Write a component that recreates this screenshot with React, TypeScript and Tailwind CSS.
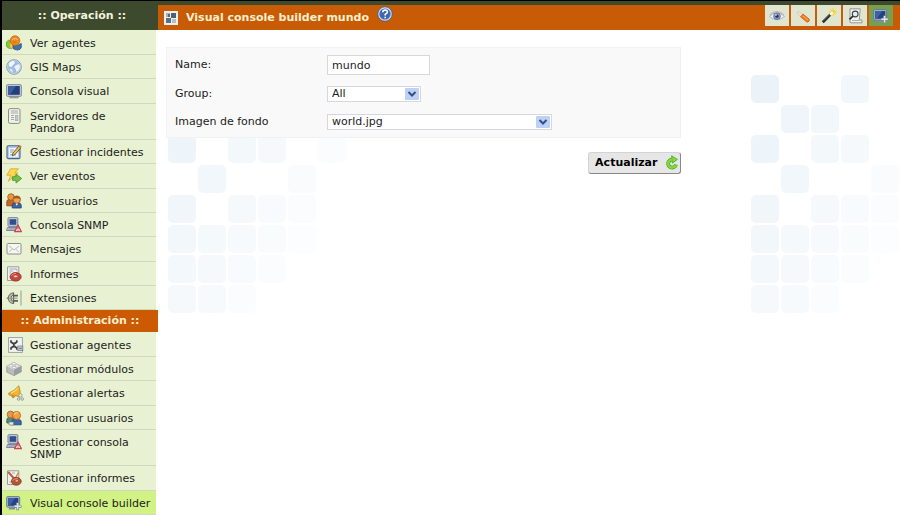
import React, { useState, ReactNode } from 'react';

const Icon = ({ children, className = '' }: { children: ReactNode; className?: string }) => (
    <svg viewBox="0 0 16 16" className={`w-4 h-4 shrink-0 ${className}`} aria-hidden="true">{children}</svg>
);

const IconAgents = () => (
    <Icon>
        <path d="M0.5 7 L2.5 5.2 L5.5 6 V13.8 L2.5 13 L0.5 11.5Z" fill="#7fc93e" stroke="#4f9a24" strokeWidth="0.7" />
        <path d="M3.6 7.5 L8 9.5 L8 14 L4 13Z" fill="#f2cd3a" stroke="#c9a01c" strokeWidth="0.5" />
        <path d="M7 9 L11 10.5 L15.3 8.5 V12.5 Q14.5 15 11.5 15 Q8 15 7 13Z" fill="#4471ab" stroke="#2d5488" strokeWidth="0.8" />
        <circle cx="9" cy="5.6" r="4.8" fill="#ef8a20" stroke="#c9660c" strokeWidth="0.8" />
        <path d="M6.2 4.8 Q9 2.2 12 4.6" fill="none" stroke="#ffbe6c" strokeWidth="1" />
        <path d="M6.5 7 H10.5" stroke="#cf6c12" strokeWidth="0.9" />
    </Icon>
);

const IconGlobe = () => (
    <Icon>
        <circle cx="8" cy="8" r="7.3" fill="#9fbbdf" stroke="#8295b4" strokeWidth="0.9" />
        <circle cx="8" cy="8" r="6.4" fill="none" stroke="#d5e2f1" strokeWidth="0.7" />
        <path d="M3 4 Q5.5 1.5 8 2 L9 4 L7 6 L5.5 8 L3 7.2Z" fill="#f2f6fb" />
        <path d="M9.5 6.5 L13 5 L14.2 8 L12.5 11.5 L10.5 13 L9.5 9.8 L8 8.6Z" fill="#eaf1f9" />
        <path d="M3.5 9.5 L6.5 10.5 L6.8 13.6 Q4 12.8 3.5 9.5Z" fill="#e2ecf7" />
    </Icon>
);

const IconScreen = () => (
    <Icon>
        <rect x="0.6" y="1.6" width="14.8" height="11.8" rx="1.2" fill="#c5cbd6" stroke="#7d8797" strokeWidth="0.9" />
        <rect x="2.2" y="3" width="11.6" height="8.8" fill="#213f7c" />
        <path d="M2.2 3 H10 L4 11.8 H2.2Z" fill="#3a5f9f" />
        <path d="M4.5 13.4 H11.5 L12.5 15 H3.5Z" fill="#9aa2ae" stroke="#78808e" strokeWidth="0.5" />
    </Icon>
);

const IconServer = () => (
    <Icon>
        <rect x="2.5" y="0.6" width="11.5" height="14.8" rx="1.6" fill="#f0f0ec" stroke="#8b8d88" />
        <path d="M4.8 3 H12 M4.8 5 H12" stroke="#a6a8a3" />
        <path d="M5 7.5 H8 M5 9.5 H8 M5 11.5 H8" stroke="#a6a8a3" />
        <rect x="9.3" y="7.3" width="2.6" height="5.4" fill="#c6c8c3" stroke="#9fa19c" strokeWidth="0.6" />
    </Icon>
);

const IconEdit = () => (
    <Icon>
        <rect x="1" y="1.8" width="13" height="12.8" rx="1.4" fill="#b8cbe9" stroke="#466293" strokeWidth="1.1" />
        <path d="M3 4 H12 V12.8 H3Z" fill="#f4f7fc" />
        <path d="M4 6 H8 M4 8 H7 M4 10.8 H10" stroke="#7f9ac6" />
        <path d="M7 9 L12.8 2.2 L14.8 3.8 L9 10.6 L6.2 11.8Z" fill="#edc445" stroke="#4c4228" strokeWidth="0.8" />
        <path d="M12.8 2.2 L13.8 0.9 L15.7 2.5 L14.8 3.8Z" fill="#d87a48" />
    </Icon>
);

const IconEvents = () => (
    <Icon>
        <path d="M4.5 0.8 H12.5 L8.8 5 H12 L2.3 13.3 L4.8 7.2 H0.8Z" fill="#fbd94c" stroke="#e0aa2c" strokeWidth="0.9" />
        <path d="M6.5 8.7 H10 V6 L15.6 10.5 L10 15 V12.3 H6.5Z" fill="#79c04a" stroke="#4d9632" strokeWidth="0.9" />
    </Icon>
);

const IconUsers = () => (
    <Icon>
        <path d="M0.8 12.8 V8.5 Q1 6.4 3.5 6.4 H7 Q9 6.4 9 8.5 V12.8Z" fill="#c5672a" stroke="#873d12" strokeWidth="0.8" />
        <circle cx="5" cy="4" r="3.3" fill="#e5963e" stroke="#9e571a" strokeWidth="0.8" />
        <path d="M6.2 15 V12 Q6.5 10 8.7 10 H12.5 Q15 10 15.2 12 V15Z" fill="#3c66a5" stroke="#213f74" strokeWidth="0.8" />
        <circle cx="10.8" cy="6.6" r="3.7" fill="#efa54d" stroke="#97531a" strokeWidth="0.8" />
        <path d="M7.3 6 Q8 2.6 11 2.9 Q14 3 14.4 6.2 Q11 4.6 7.3 6Z" fill="#9c5a22" />
        <path d="M9.5 10.4 L10.8 12.7 L12 10.4Z" fill="#fff" />
    </Icon>
);

const IconSnmp = () => (
    <Icon>
        <rect x="2" y="0.7" width="9.8" height="8.6" rx="0.8" fill="#cfd5e2" stroke="#66718c" strokeWidth="0.9" />
        <rect x="3.5" y="2.2" width="6.8" height="5.6" fill="#304f8b" />
        <path d="M1.5 10.5 H11.5 L12.5 13.5 H0.5Z" fill="#c3c9d5" stroke="#67718a" strokeWidth="0.8" />
        <path d="M2.5 12 H10.5" stroke="#77819a" strokeWidth="0.8" />
        <path d="M12 8 L15.4 14.7 H8.6Z" fill="#f6dcdc" stroke="#c8464c" strokeWidth="1.3" strokeLinejoin="round" />
        <path d="M12 10.2 V12.2 M12 13 V13.7" stroke="#91303a" strokeWidth="0.9" />
    </Icon>
);

const IconMail = () => (
    <Icon>
        <rect x="1" y="2.5" width="14" height="10.5" rx="1" fill="#f6f6f3" stroke="#8d8f8c" />
        <path d="M3 5 L8 9 L13 5 M3.2 11 L6 8.2 M12.8 11 L10 8.2" fill="none" stroke="#b1b3b0" strokeWidth="0.9" />
    </Icon>
);

const IconReport = () => (
    <Icon>
        <path d="M1.5 0.8 H12.8 V14.5 H1.5Z" fill="#f0f1f3" stroke="#8f949c" strokeWidth="0.9" />
        <path d="M3.5 3 H9.5 M3.5 5 H7 M3.5 7 H5" stroke="#98a1b2" strokeWidth="0.9" />
        <path d="M9 3 H11 V5.5" fill="none" stroke="#c9a3a3" />
        <ellipse cx="9.6" cy="10.8" rx="5.6" ry="4.3" fill="#c4473a" stroke="#8a2d26" strokeWidth="0.8" />
        <ellipse cx="9.6" cy="10.4" rx="2.2" ry="1.3" fill="#f0c9b8" stroke="#9c3a30" strokeWidth="0.6" />
        <path d="M5.2 9.6 Q7 7.2 10 7.4" fill="none" stroke="#e58a78" strokeWidth="1" />
    </Icon>
);

const IconPlug = () => (
    <Icon>
        <path d="M0.8 8.2 H3" stroke="#70736c" strokeWidth="1.4" />
        <path d="M7.5 2.8 Q2.3 3.2 2.3 8.2 Q2.3 13.2 7.5 13.6 V11.4 Q5 11 5 8.2 Q5 5.4 7.5 5Z" fill="#b4b8ad" stroke="#676b62" strokeWidth="0.9" />
        <path d="M7.5 2.8 V13.6" stroke="#5b5f57" strokeWidth="1.2" />
        <path d="M8 5.6 H12 M8 10.8 H12" stroke="#5b5f57" strokeWidth="1.7" />
        <path d="M5 8.2 H11.5" stroke="#898d84" strokeWidth="1" />
        <path d="M15 0.5 V15.5" stroke="#bac2ad" strokeWidth="1.8" />
    </Icon>
);

const IconAgentConf = () => (
    <Icon className="translate-x-0.5">
        <rect x="0.6" y="0.6" width="13.8" height="14.8" fill="#f1f3f0" stroke="#979da1" strokeWidth="0.9" />
        <path d="M3 3.2 V5 L4.8 6.3 H7 L8.8 5 V3.2 M3 12.8 V11 L4.8 9.7 H7 L8.8 11 V12.8 M5.9 6.3 V9.7" fill="none" stroke="#3d4245" strokeWidth="1.7" />
        <rect x="9.8" y="9" width="5" height="4.6" fill="#c5cbd2" stroke="#767e85" strokeWidth="0.8" />
        <path d="M10.7 11.3 H14" stroke="#59636c" strokeWidth="0.8" />
    </Icon>
);

const IconModule = () => (
    <Icon>
        <path d="M0.8 5.2 L7.5 2 L15.2 5 V10.8 L8 14.6 L0.8 11Z" fill="#b9bbbc" stroke="#8f9294" strokeWidth="0.8" />
        <path d="M0.8 5.2 L7.5 2 L15.2 5 L8 8.8Z" fill="#e4e6e6" />
        <path d="M8 8.8 L15.2 5 V10.8 L8 14.6Z" fill="#9a9ea0" />
        <ellipse cx="4.8" cy="4.8" rx="1.9" ry="1.3" fill="#f6f6f6" stroke="#a3a6a8" strokeWidth="0.6" />
        <ellipse cx="11" cy="4.8" rx="1.9" ry="1.3" fill="#f6f6f6" stroke="#a3a6a8" strokeWidth="0.6" />
        <ellipse cx="8" cy="2.7" rx="1.9" ry="1.3" fill="#f6f6f6" stroke="#a3a6a8" strokeWidth="0.6" />
        <ellipse cx="8" cy="6.6" rx="1.9" ry="1.2" fill="#f6f6f6" stroke="#a3a6a8" strokeWidth="0.6" />
    </Icon>
);

const IconAlert = () => (
    <Icon className="translate-x-0.5">
        <path d="M10.8 0.8 Q12.6 5.5 12.2 12 Q7 9.8 1 10 L0.6 8.2 Q6.8 5.8 10.8 0.8Z" fill="#f3b52f" stroke="#c48a1c" strokeWidth="0.9" />
        <path d="M3 8 Q8 6 10.3 2.8" fill="none" stroke="#fce39a" strokeWidth="1.1" />
        <path d="M3 10.2 L5 13 L7.5 10.9" fill="#dc8c1e" stroke="#b97420" strokeWidth="0.7" />
        <circle cx="12.4" cy="10.4" r="1.7" fill="#e6e8e4" stroke="#969b95" strokeWidth="0.9" />
        <circle cx="14.2" cy="14" r="1.3" fill="#e6e8e4" stroke="#969b95" strokeWidth="0.9" />
        <circle cx="10.6" cy="14" r="1.3" fill="#e6e8e4" stroke="#969b95" strokeWidth="0.9" />
    </Icon>
);

const IconUserConf = () => (
    <Icon>
        <path d="M0.8 13 V9.5 Q1 7.4 3.5 7.4 H8 V13Z" fill="#4a8a78" stroke="#2d5f66" strokeWidth="0.8" />
        <circle cx="4.6" cy="4.5" r="3.4" fill="#e39a4a" stroke="#a85f1c" strokeWidth="0.8" />
        <path d="M5.5 14.8 V12 Q6 9.6 8.4 9.6 H12.5 Q15 9.6 15.2 11.5 V14.8Z" fill="#3c66a5" stroke="#213f74" strokeWidth="0.8" />
        <circle cx="10.6" cy="5.4" r="4" fill="#f1a243" stroke="#b0651d" strokeWidth="0.8" />
        <path d="M8 4.6 Q9.5 2.2 12 3" fill="none" stroke="#ffd089" strokeWidth="1.1" />
        <path d="M3 12 H7.5 V15 H3Z" fill="#e4e9e4" stroke="#73887a" strokeWidth="0.7" />
    </Icon>
);

const IconReportConf = () => (
    <Icon>
        <path d="M1.5 0.8 H12.8 V14.5 H1.5Z" fill="#f3f2ed" stroke="#8f9190" strokeWidth="0.9" />
        <path d="M3.3 12 H5 M6 3 H9" stroke="#a6a8ab" />
        <path d="M2.2 2 L8.5 9" stroke="#b9603c" strokeWidth="2" />
        <path d="M12.5 2.5 L9.5 8.2" stroke="#d18945" strokeWidth="1.5" />
        <ellipse cx="10.3" cy="11.3" rx="4.9" ry="3.9" fill="#b95535" stroke="#7c3020" strokeWidth="0.8" />
        <ellipse cx="10.8" cy="10.8" rx="1.8" ry="1.2" fill="#efc0a6" stroke="#7c3020" strokeWidth="0.5" />
        <path d="M6.6 10.4 Q8.5 8.2 11.5 8.6" fill="none" stroke="#e39a7a" strokeWidth="1" />
    </Icon>
);

const IconBuilder = () => (
    <Icon>
        <rect x="0.7" y="1.6" width="13" height="10.6" rx="1" fill="#a8b4c9" stroke="#64748f" strokeWidth="0.9" />
        <rect x="2.1" y="3" width="10.2" height="7.8" fill="#234383" />
        <path d="M2.1 3 H9 L4 10.8 H2.1Z" fill="#3c62a4" />
        <path d="M3.5 12.2 H9 V14.4 H2.5Z" fill="#818c9f" />
        <path d="M11.6 7.4 V15.2 M7.9 11.3 H15.5" stroke="#7c8797" strokeWidth="2.8" />
        <path d="M11.6 8 V14.6 M8.5 11.3 H14.9" stroke="#dde4ee" strokeWidth="1.5" />
    </Icon>
);

const IconEye = () => (
    <Icon>
        <path d="M0.5 8.4 Q7.5 1.5 15.5 8.4 Q8 15 0.5 8.4Z" fill="#f7f7fa" stroke="#aeb0bb" strokeWidth="1" />
        <path d="M1 6.6 Q7.5 0.6 15 6.6" fill="none" stroke="#c9b8b0" strokeWidth="1.1" />
        <circle cx="8" cy="8.2" r="3.5" fill="#7f95c6" stroke="#5c709e" strokeWidth="0.6" />
        <circle cx="8" cy="8.2" r="1.6" fill="#22345d" />
        <circle cx="7" cy="7" r="0.8" fill="#fff" />
    </Icon>
);

const IconPencil = () => (
    <Icon>
        <path d="M2 4 L4.2 3.7 L8.2 6.7 L5.8 9.3 L2.8 6Z" fill="#ebe2d3" stroke="#c4b8a4" strokeWidth="0.5" />
        <path d="M5.5 8.8 L8 6 L14.3 11.2 Q14.8 13.9 12 14.2Z" fill="#ed7b1d" stroke="#cd5c10" strokeWidth="0.7" />
        <path d="M8 8 L13 12.2" stroke="#ffb066" strokeWidth="1" />
    </Icon>
);

const IconWand = () => (
    <Icon>
        <circle cx="11.8" cy="4.2" r="3.6" fill="#f6ea8a" />
        <path d="M12 0.2 V7.8 M8.2 4 H15.8 M9.3 1.3 L14.7 6.7 M14.7 1.3 L9.3 6.7" stroke="#e5c934" strokeWidth="0.9" />
        <path d="M1.8 14.2 L9.5 6.4" stroke="#2b2d29" strokeWidth="2.7" />
        <path d="M9.1 6.8 L11.8 4.1" stroke="#f7f7ee" strokeWidth="2.5" />
        <path d="M2.5 12.7 L8.8 6.3" stroke="#777a73" strokeWidth="0.7" />
    </Icon>
);

const IconPreview = () => (
    <Icon>
        <path d="M3 0.8 H13.2 L12.3 12 H15 V14.8 H4 Q2.2 14.6 3 12.5Z" fill="#f1f1ed" stroke="#8b8e87" strokeWidth="0.9" />
        <path d="M5 12.5 H12.5" stroke="#a8aaa4" strokeWidth="0.9" />
        <circle cx="8.2" cy="6" r="2.9" fill="#e4edf3" stroke="#3f4446" strokeWidth="1.1" />
        <path d="M6 8.2 L2.4 11.4" stroke="#262a2b" strokeWidth="1.8" />
    </Icon>
);

const IconHelp = () => (
    <svg viewBox="0 0 16 16" className="w-4 h-4" aria-hidden="true">
        <circle cx="8" cy="8" r="7.3" fill="#d3dbe8" stroke="#4a587e" strokeWidth="0.9" />
        <circle cx="8" cy="8" r="5.6" fill="#3e68b1" />
        <path d="M5.7 6.3 Q5.8 4 8.1 4 Q10.4 4.1 10.4 6 Q10.4 7.2 8.2 8.4 V9.5 M8.2 10.7 V12.2" fill="none" stroke="#fff" strokeWidth="1.6" />
    </svg>
);

const IconMap = () => (
    <svg viewBox="0 0 14 14" className="w-3.5 h-3.5" aria-hidden="true">
        <rect width="14" height="14" fill="#eef0ef" />
        <rect x="2" y="2" width="4" height="4" fill="#a7afb5" />
        <rect x="7" y="2" width="5" height="5" fill="#4a6277" />
        <rect x="2" y="7" width="5" height="5" fill="#5d7080" />
        <rect x="8" y="8" width="4" height="4" fill="#b7bec3" />
        <rect x="4" y="3" width="2" height="3" fill="#56697a" />
    </svg>
);

const IconUpdate = () => (
    <svg viewBox="0 0 14 16" className="w-3.5 h-4" aria-hidden="true">
        <path d="M7.5 4.6 A4 4 0 1 0 11 9.6" fill="none" stroke="#4ba421" strokeWidth="3.8" />
        <path d="M6.6 0.8 L12.4 4.4 L7.4 8.2Z" fill="#83da3b" stroke="#4ba421" strokeWidth="0.8" />
        <path d="M7.5 4.6 A4 4 0 1 0 11 9.6" fill="none" stroke="#83da3b" strokeWidth="2.4" />
    </svg>
);

const operation = [
    { name: 'Ver agentes', icon: <IconAgents /> },
    { name: 'GIS Maps', icon: <IconGlobe /> },
    { name: 'Consola visual', icon: <IconScreen /> },
    { name: 'Servidores de Pandora', icon: <IconServer /> },
    { name: 'Gestionar incidentes', icon: <IconEdit /> },
    { name: 'Ver eventos', icon: <IconEvents /> },
    { name: 'Ver usuarios', icon: <IconUsers /> },
    { name: 'Consola SNMP', icon: <IconSnmp /> },
    { name: 'Mensajes', icon: <IconMail /> },
    { name: 'Informes', icon: <IconReport /> },
    { name: 'Extensiones', icon: <IconPlug /> },
];

const administration = [
    { name: 'Gestionar agentes', icon: <IconAgentConf /> },
    { name: 'Gestionar módulos', icon: <IconModule /> },
    { name: 'Gestionar alertas', icon: <IconAlert /> },
    { name: 'Gestionar usuarios', icon: <IconUserConf /> },
    { name: 'Gestionar consola SNMP', icon: <IconSnmp /> },
    { name: 'Gestionar informes', icon: <IconReportConf /> },
    { name: 'Visual console builder', icon: <IconBuilder />, active: true },
];

const tabs = [
    { name: 'Ver', icon: <IconEye /> },
    { name: 'Datos', icon: <IconPencil /> },
    { name: 'Asistente', icon: <IconWand /> },
    { name: 'Vista previa', icon: <IconPreview /> },
    { name: 'Editor', icon: <IconBuilder />, active: true },
];

// columns filled in each row of the background mosaic
const mosaic = [
    [0, 3],
    [1, 2],
    [0, 2, 3, 5],
    [1, 4],
    [0, 2, 3, 4],
    [0, 1, 2, 3, 4],
    [0, 1, 2, 3],
    [0, 1, 2],
];

const Mosaic = () => (
    <svg viewBox="0 0 180 240" className="w-[180px] h-[240px]" aria-hidden="true">
        {mosaic.map((cols, row) => cols.map((col) => (
            <rect
                key={`${row}-${col}`}
                x={col * 30}
                y={row * 30}
                width="28"
                height="28"
                rx="5"
                fill="#ebf3f9"
                fillOpacity={Math.max(0.15, 1 - row * 0.07 - col * 0.12)}
            />
        )))}
    </svg>
);

const Menu = ({ items }: { items: { name: string; icon: ReactNode; active?: boolean }[] }) => (
    <ul className="mr-0.5 pt-px bg-[#e8f1d1]">
        {items.map((item) => (
            <li key={item.name} className={`border-b border-[#d0d9c0] [&:nth-child(3n)]:pb-px ${item.active ? 'bg-[#d2f285]' : ''}`}>
                <a href="#" className="flex items-start gap-2 pl-1 pt-1 pb-[3px]">
                    {item.icon}
                    <span className="max-w-[122px] leading-3 pt-[3px] pb-px">{item.name}</span>
                </a>
            </li>
        ))}
    </ul>
);

const Select = ({ id, value, className }: { id: string; value: string; className: string }) => (
    <div className={`relative ${className}`}>
        <select id={id} defaultValue={value} className="appearance-none block w-full h-4 pl-1 pr-5 leading-3 bg-white border border-[#d5d9de] outline-none">
            <option>{value}</option>
        </select>
        <svg viewBox="0 0 14 12" className="absolute right-0.5 top-0.5 w-3.5 h-3 pointer-events-none" aria-hidden="true">
            <rect width="14" height="12" rx="1" fill="#bdd0f6" />
            <path d="M3.5 4 L7 7.5 L10.5 4" fill="none" stroke="#344f82" strokeWidth="2" />
        </svg>
    </div>
);

const App = () => {

    const [name, setName] = useState('mundo')

    return (
        <div className="flex min-h-screen bg-white border-l-2 border-black text-[11px] text-[#1c1c1c] font-['DejaVu_Sans',Verdana,sans-serif]">
            <nav className="w-[156px] shrink-0 h-screen overflow-hidden">
                <h2 className="h-[30px] pt-px pl-1 border-t border-black bg-[#3e4a2d] text-[#f0f3df] font-bold text-center leading-7">:: Operación ::</h2>
                <Menu items={operation} />
                <h2 className="h-[22px] bg-[#cc5a03] text-[#fbefcf] font-bold text-center leading-[22px]">:: Administración ::</h2>
                <Menu items={administration} />
            </nav>
            <div className="flex-1 min-w-0">
                <header className="h-[30px] border-t border-black bg-[#c85b05]">
                    <div className="h-1 bg-[#3e4a2d]"></div>
                    <div className="flex items-start">
                        <div className="flex items-center h-[25px] pl-1.5">
                            <IconMap />
                            <h1 className="ml-2 pt-0.5 font-bold text-[#faefcb]">Visual console builder mundo</h1>
                        </div>
                        <button aria-label="Ayuda" className="ml-2 mt-px"><IconHelp /></button>
                        <div className="flex gap-0.5 ml-auto mr-[7px]">
                            {tabs.map((tab) => (
                                <button key={tab.name} aria-label={tab.name} className={`flex items-center justify-center w-6 h-[21px] ${tab.active ? 'bg-[#779f50]' : 'bg-[#dfe5cf]'}`}>
                                    {tab.icon}
                                </button>
                            ))}
                        </div>
                    </div>
                </header>
                <main className="relative px-2 pt-[17px]">
                    <div className="absolute inset-x-0 top-[45px] h-[240px] overflow-hidden pointer-events-none">
                        <div className="absolute left-2.5"><Mosaic /></div>
                        <div className="absolute left-[593px]"><Mosaic /></div>
                    </div>
                    <form className="relative w-[71%]" onSubmit={(e) => e.preventDefault()}>
                        <div className="grid grid-cols-[152px_1fr] items-center gap-y-[11px] px-2 py-[7px] bg-[#f9f9f9] border border-[#f1f1f1]">
                            <label htmlFor="name">Name:</label>
                            <input id="name" value={name} onChange={(e) => setName(e.target.value)} className="w-[103px] h-5 px-1 bg-white border border-[#d8d8d8] outline-none" />
                            <label htmlFor="group">Group:</label>
                            <Select id="group" value="All" className="w-[94px]" />
                            <label htmlFor="background">Imagen de fondo</label>
                            <Select id="background" value="world.jpg" className="w-[225px]" />
                        </div>
                        <div className="flex justify-end mt-3.5">
                            <button type="submit" className="flex items-center gap-2 h-[22px] pl-1.5 pr-px rounded-[3px] bg-[#e6e6e6] border border-[#d3d3d3] border-r-[#888] border-b-[#888] font-bold text-black">
                                Actualizar
                                <IconUpdate />
                            </button>
                        </div>
                    </form>
                </main>
            </div>
        </div>
    );
};

export default App;
